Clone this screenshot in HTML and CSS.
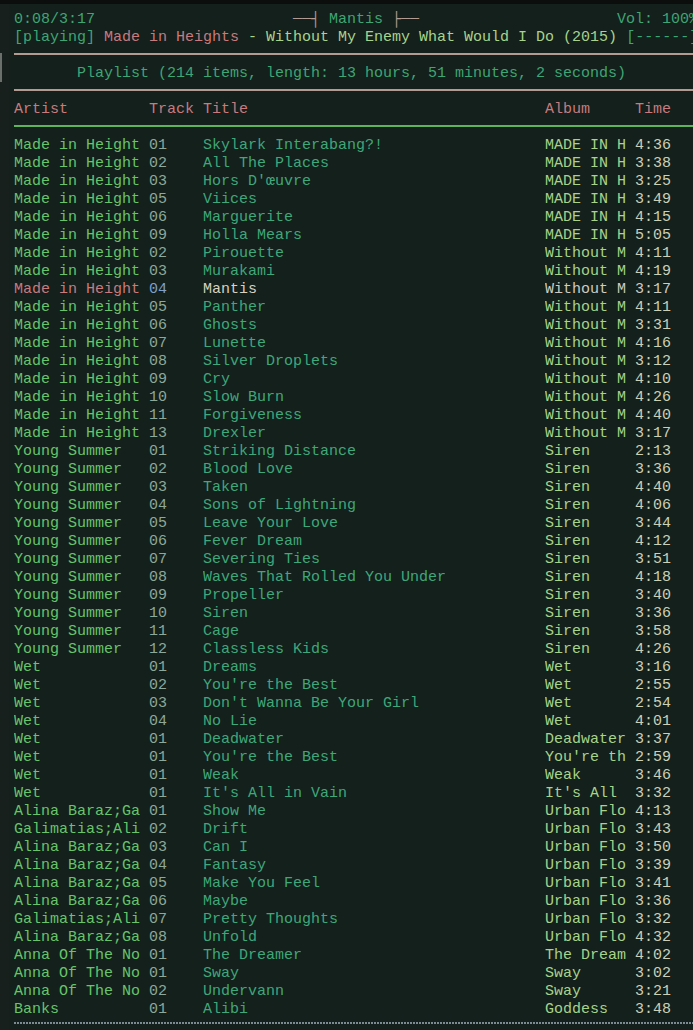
FILE: index.html
```html
<!DOCTYPE html>
<html lang="en">
<head>
<meta charset="utf-8">
<title>ncmpcpp</title>
<link rel="stylesheet" href="styles.css">
</head>
<body>
<div class="topbar"></div>
<div class="screen">
  <div class="gutter"><div class="scroll-mark"></div></div>
  <div class="term">
    <div class="line status">
      <span class="c-teal">0:08/3:17</span>
      <span class="title-box"><span class="c-sep">──┤ </span><span class="c-teal">Mantis</span><span class="c-sep"> ├──</span></span>
      <span class="c-teal vol">Vol: 100%</span>
    </div>
    <div class="line"><span class="c-teal">[playing] </span><span class="c-pink">Made in Heights</span><span class="c-yg"> - Without My Enemy What Would I Do (2015) </span><span class="c-teal">[------]</span></div>
    <div class="line sep"></div>
    <div class="line plhead c-teal">Playlist (214 items, length: 13 hours, 51 minutes, 2 seconds)</div>
    <div class="line sep"></div>
    <div class="line row head">
      <span>Artist</span><span>Track</span><span>Title</span><span>Album</span><span>Time</span>
    </div>
    <div class="line sep green"></div>

    <div class="list">
      <div class="line row"><span>Made in Height</span><span>01</span><span>Skylark Interabang?!</span><span>MADE IN H</span><span>4:36</span></div>
      <div class="line row"><span>Made in Height</span><span>02</span><span>All The Places</span><span>MADE IN H</span><span>3:38</span></div>
      <div class="line row"><span>Made in Height</span><span>03</span><span>Hors D'œuvre</span><span>MADE IN H</span><span>3:25</span></div>
      <div class="line row"><span>Made in Height</span><span>05</span><span>Viices</span><span>MADE IN H</span><span>3:49</span></div>
      <div class="line row"><span>Made in Height</span><span>06</span><span>Marguerite</span><span>MADE IN H</span><span>4:15</span></div>
      <div class="line row"><span>Made in Height</span><span>09</span><span>Holla Mears</span><span>MADE IN H</span><span>5:05</span></div>
      <div class="line row"><span>Made in Height</span><span>02</span><span>Pirouette</span><span>Without M</span><span>4:11</span></div>
      <div class="line row"><span>Made in Height</span><span>03</span><span>Murakami</span><span>Without M</span><span>4:19</span></div>
      <div class="line row current"><span>Made in Height</span><span>04</span><span>Mantis</span><span>Without M</span><span>3:17</span></div>
      <div class="line row"><span>Made in Height</span><span>05</span><span>Panther</span><span>Without M</span><span>4:11</span></div>
      <div class="line row"><span>Made in Height</span><span>06</span><span>Ghosts</span><span>Without M</span><span>3:31</span></div>
      <div class="line row"><span>Made in Height</span><span>07</span><span>Lunette</span><span>Without M</span><span>4:16</span></div>
      <div class="line row"><span>Made in Height</span><span>08</span><span>Silver Droplets</span><span>Without M</span><span>3:12</span></div>
      <div class="line row"><span>Made in Height</span><span>09</span><span>Cry</span><span>Without M</span><span>4:10</span></div>
      <div class="line row"><span>Made in Height</span><span>10</span><span>Slow Burn</span><span>Without M</span><span>4:26</span></div>
      <div class="line row"><span>Made in Height</span><span>11</span><span>Forgiveness</span><span>Without M</span><span>4:40</span></div>
      <div class="line row"><span>Made in Height</span><span>13</span><span>Drexler</span><span>Without M</span><span>3:17</span></div>
      <div class="line row"><span>Young Summer</span><span>01</span><span>Striking Distance</span><span>Siren</span><span>2:13</span></div>
      <div class="line row"><span>Young Summer</span><span>02</span><span>Blood Love</span><span>Siren</span><span>3:36</span></div>
      <div class="line row"><span>Young Summer</span><span>03</span><span>Taken</span><span>Siren</span><span>4:40</span></div>
      <div class="line row"><span>Young Summer</span><span>04</span><span>Sons of Lightning</span><span>Siren</span><span>4:06</span></div>
      <div class="line row"><span>Young Summer</span><span>05</span><span>Leave Your Love</span><span>Siren</span><span>3:44</span></div>
      <div class="line row"><span>Young Summer</span><span>06</span><span>Fever Dream</span><span>Siren</span><span>4:12</span></div>
      <div class="line row"><span>Young Summer</span><span>07</span><span>Severing Ties</span><span>Siren</span><span>3:51</span></div>
      <div class="line row"><span>Young Summer</span><span>08</span><span>Waves That Rolled You Under</span><span>Siren</span><span>4:18</span></div>
      <div class="line row"><span>Young Summer</span><span>09</span><span>Propeller</span><span>Siren</span><span>3:40</span></div>
      <div class="line row"><span>Young Summer</span><span>10</span><span>Siren</span><span>Siren</span><span>3:36</span></div>
      <div class="line row"><span>Young Summer</span><span>11</span><span>Cage</span><span>Siren</span><span>3:58</span></div>
      <div class="line row"><span>Young Summer</span><span>12</span><span>Classless Kids</span><span>Siren</span><span>4:26</span></div>
      <div class="line row"><span>Wet</span><span>01</span><span>Dreams</span><span>Wet</span><span>3:16</span></div>
      <div class="line row"><span>Wet</span><span>02</span><span>You're the Best</span><span>Wet</span><span>2:55</span></div>
      <div class="line row"><span>Wet</span><span>03</span><span>Don't Wanna Be Your Girl</span><span>Wet</span><span>2:54</span></div>
      <div class="line row"><span>Wet</span><span>04</span><span>No Lie</span><span>Wet</span><span>4:01</span></div>
      <div class="line row"><span>Wet</span><span>01</span><span>Deadwater</span><span>Deadwater</span><span>3:37</span></div>
      <div class="line row"><span>Wet</span><span>01</span><span>You're the Best</span><span>You're th</span><span>2:59</span></div>
      <div class="line row"><span>Wet</span><span>01</span><span>Weak</span><span>Weak</span><span>3:46</span></div>
      <div class="line row"><span>Wet</span><span>01</span><span>It's All in Vain</span><span>It's All</span><span>3:32</span></div>
      <div class="line row"><span>Alina Baraz;Ga</span><span>01</span><span>Show Me</span><span>Urban Flo</span><span>4:13</span></div>
      <div class="line row"><span>Galimatias;Ali</span><span>02</span><span>Drift</span><span>Urban Flo</span><span>3:43</span></div>
      <div class="line row"><span>Alina Baraz;Ga</span><span>03</span><span>Can I</span><span>Urban Flo</span><span>3:50</span></div>
      <div class="line row"><span>Alina Baraz;Ga</span><span>04</span><span>Fantasy</span><span>Urban Flo</span><span>3:39</span></div>
      <div class="line row"><span>Alina Baraz;Ga</span><span>05</span><span>Make You Feel</span><span>Urban Flo</span><span>3:41</span></div>
      <div class="line row"><span>Alina Baraz;Ga</span><span>06</span><span>Maybe</span><span>Urban Flo</span><span>3:36</span></div>
      <div class="line row"><span>Galimatias;Ali</span><span>07</span><span>Pretty Thoughts</span><span>Urban Flo</span><span>3:32</span></div>
      <div class="line row"><span>Alina Baraz;Ga</span><span>08</span><span>Unfold</span><span>Urban Flo</span><span>4:32</span></div>
      <div class="line row"><span>Anna Of The No</span><span>01</span><span>The Dreamer</span><span>The Dream</span><span>4:02</span></div>
      <div class="line row"><span>Anna Of The No</span><span>01</span><span>Sway</span><span>Sway</span><span>3:02</span></div>
      <div class="line row"><span>Anna Of The No</span><span>02</span><span>Undervann</span><span>Sway</span><span>3:21</span></div>
      <div class="line row"><span>Banks</span><span>01</span><span>Alibi</span><span>Goddess</span><span>3:48</span></div>
    </div>
    <div class="line progress"></div>
  </div>
</div>
</body>
</html>
```

FILE: styles.css
```css
html, body {
  margin: 0;
  padding: 0;
  height: 100%;
  overflow: hidden;
  background: #13201c;
}

body {
  font-family: "Liberation Mono", "DejaVu Sans Mono", monospace;
  font-size: 15px;
  line-height: 18px;
}

.topbar {
  height: 4px;
  background: #0c0d0d;
}

.screen {
  display: flex;
}

.gutter {
  width: 9px;
  flex: none;
  background: #17201d;
  position: relative;
  min-height: 1026px;
}

.scroll-mark {
  position: absolute;
  left: 0;
  top: 49px;
  width: 2px;
  height: 29px;
  background: #6b706d;
}

.term {
  flex: none;
  width: 684px;
  padding: 7px 0 0 5px;
}

.line {
  height: 18px;
  white-space: pre;
  overflow: hidden;
}

.status {
  display: grid;
  grid-template-columns: 279px auto 1fr;
}

.vol {
  text-align: right;
}

.sep {
  position: relative;
}

.sep::before {
  content: "";
  position: absolute;
  left: 0;
  right: 0;
  top: 6px;
  height: 2px;
  background: #b39a92;
}

.sep.green::before {
  background: #5db45d;
}

.plhead {
  padding-left: 63px;
}

.c-teal { color: #3fa574; }
.c-pink { color: #c97a7e; }
.c-yg   { color: #a9d38a; }
.c-sep  { color: #b39a92; }

.row {
  display: grid;
  grid-template-columns: 135px 54px 342px 90px 1fr;
}

.row > span {
  overflow: hidden;
}

.row > span:nth-child(1) { color: #68c46b; }
.row > span:nth-child(2) { color: #8da899; }
.row > span:nth-child(3) { color: #3fa77a; }
.row > span:nth-child(4) { color: #a7d38a; }
.row > span:nth-child(5) { color: #ccd0b6; }

.row.head > span { color: #c97a7e; }

.row.current > span:nth-child(1) { color: #c97a7e; }
.row.current > span:nth-child(2) { color: #7f9fcb; }
.row.current > span:nth-child(3) { color: #d9d0c0; }
.row.current > span:nth-child(4) { color: #d0cbc2; }
.row.current > span:nth-child(5) { color: #d0cbc2; }

.progress {
  background-image: radial-gradient(circle at 1px 1px, #7c8a92 0.9px, transparent 1.1px);
  background-size: 3px 3px;
  background-position: 0 3px;
  background-repeat: repeat-x;
  height: 11px;
}
```
